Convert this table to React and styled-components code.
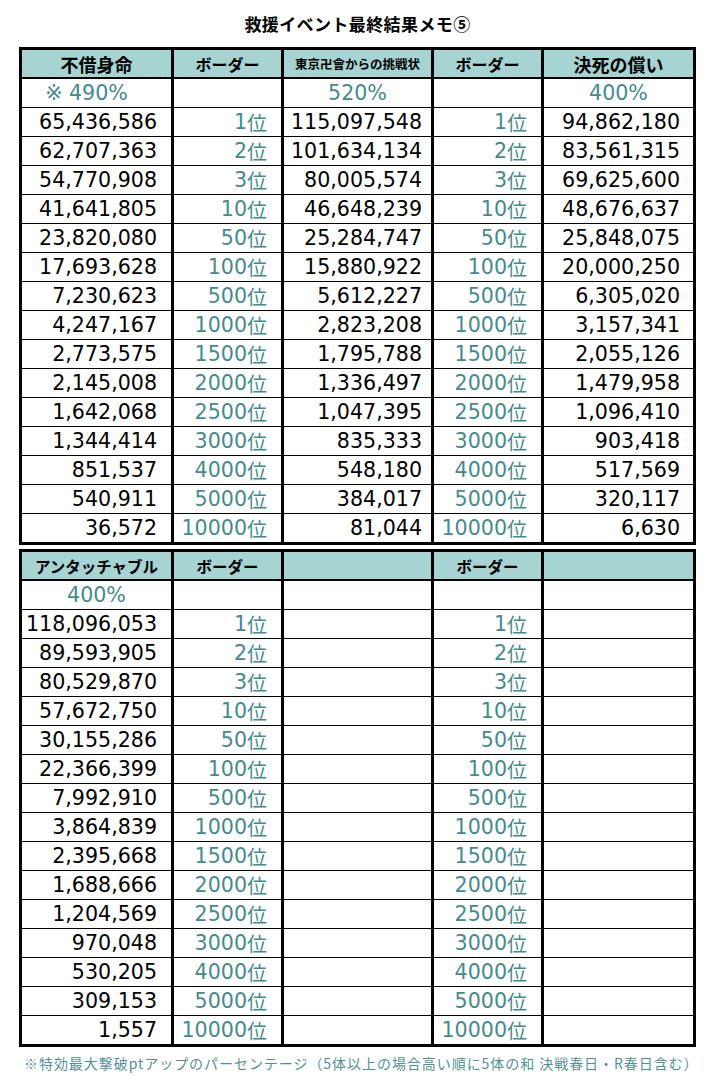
import React from 'react';
import styled, { createGlobalStyle } from 'styled-components';

const GlobalStyle = createGlobalStyle`
  html, body {
    margin: 0;
    padding: 0;
    background: #ffffff;
  }
  body {
    font-family: "DejaVu Sans", "Noto Sans CJK JP", sans-serif;
    color: #000;
  }
`;

const Page = styled.div`
  width: 715px;
  display: flex;
  flex-direction: column;
  align-items: center;
`;

const Title = styled.h1`
  margin: 0;
  height: 47px;
  line-height: 48px;
  font-family: "Noto Sans CJK JP", sans-serif;
  font-size: 17px;
  font-weight: 700;
  letter-spacing: 0.4px;
`;

const Sheet = styled.div`
  display: grid;
  grid-template-columns: 149px 107px 147px 107px 149px;
  grid-auto-rows: 28px;
  gap: 1px 3px;
  background: #000;
  border: 3px solid #000;
  margin-top: ${p => p.$gap || 0}px;
`;

const HeadCell = styled.div`
  background: #a5d4d3;
  border-bottom: 1px solid #000;
  display: flex;
  align-items: center;
  justify-content: center;
  font-family: "Noto Sans CJK JP", sans-serif;
  font-weight: 700;
  font-size: ${p => p.$size || 16}px;
  white-space: nowrap;
  overflow: hidden;
`;

const Cell = styled.div`
  background: #fff;
  display: flex;
  align-items: center;
  justify-content: ${p => (p.$center ? 'center' : 'flex-end')};
  padding-right: ${p => p.$pad || 0}px;
  font-size: 20.6px;
  color: ${p => (p.$teal ? '#448b8c' : '#000')};
  white-space: nowrap;
`;

const Rank = styled.span`
  font-family: "Noto Sans CJK JP", sans-serif;
  font-size: 20px;
`;

const Note = styled.p`
  margin: 6px 0 0;
  align-self: flex-start;
  padding-left: 24px;
  font-family: "Noto Sans CJK JP", sans-serif;
  font-size: 14px;
  letter-spacing: 0.95px;
  color: #4f9294;
  white-space: nowrap;
`;

const ranks = [1, 2, 3, 10, 50, 100, 500, 1000, 1500, 2000, 2500, 3000, 4000, 5000, 10000];

const first = {
  heads: [
    { text: '不借身命', size: 18 },
    { text: 'ボーダー', size: 16 },
    { text: '東京卍會からの挑戦状', size: 12.5 },
    { text: 'ボーダー', size: 16 },
    { text: '決死の償い', size: 18 },
  ],
  rates: [{ text: '※ 490%', pad: 20 }, null, { text: '520%' }, null, { text: '400%' }],
  a: ['65,436,586', '62,707,363', '54,770,908', '41,641,805', '23,820,080', '17,693,628', '7,230,623', '4,247,167', '2,773,575', '2,145,008', '1,642,068', '1,344,414', '851,537', '540,911', '36,572'],
  b: ['115,097,548', '101,634,134', '80,005,574', '46,648,239', '25,284,747', '15,880,922', '5,612,227', '2,823,208', '1,795,788', '1,336,497', '1,047,395', '835,333', '548,180', '384,017', '81,044'],
  c: ['94,862,180', '83,561,315', '69,625,600', '48,676,637', '25,848,075', '20,000,250', '6,305,020', '3,157,341', '2,055,126', '1,479,958', '1,096,410', '903,418', '517,569', '320,117', '6,630'],
};

const second = {
  heads: [
    { text: 'アンタッチャブル', size: 15.5 },
    { text: 'ボーダー', size: 15.5 },
    { text: '' },
    { text: 'ボーダー', size: 15.5 },
    { text: '' },
  ],
  rates: [{ text: '400%' }, null, null, null, null],
  a: ['118,096,053', '89,593,905', '80,529,870', '57,672,750', '30,155,286', '22,366,399', '7,992,910', '3,864,839', '2,395,668', '1,688,666', '1,204,569', '970,048', '530,205', '309,153', '1,557'],
  b: [],
  c: [],
};

const RankCell = ({ n }) => (
  <Cell $teal $pad={14}>
    {n}
    <Rank>位</Rank>
  </Cell>
);

const ResultSheet = ({ data, gap }) => (
  <Sheet $gap={gap}>
    {data.heads.map((h, i) => (
      <HeadCell key={`h${i}`} $size={h.size}>{h.text}</HeadCell>
    ))}
    {data.rates.map((r, i) => (
      <Cell key={`r${i}`} $teal $center $pad={r && r.pad}>
        {r ? r.text : ''}
      </Cell>
    ))}
    {ranks.map((n, i) => (
      <React.Fragment key={n}>
        <Cell $pad={14}>{data.a[i]}</Cell>
        <RankCell n={n} />
        <Cell $pad={9}>{data.b[i] || ''}</Cell>
        <RankCell n={n} />
        <Cell $pad={13}>{data.c[i] || ''}</Cell>
      </React.Fragment>
    ))}
  </Sheet>
);

export default function App() {
  return (
    <>
      <GlobalStyle />
      <Page>
        <Title>救援イベント最終結果メモ⑤</Title>
        <ResultSheet data={first} />
        <ResultSheet data={second} gap={4} />
        <Note>※特効最大撃破ptアップのパーセンテージ（5体以上の場合高い順に5体の和 決戦春日・R春日含む）</Note>
      </Page>
    </>
  );
}
